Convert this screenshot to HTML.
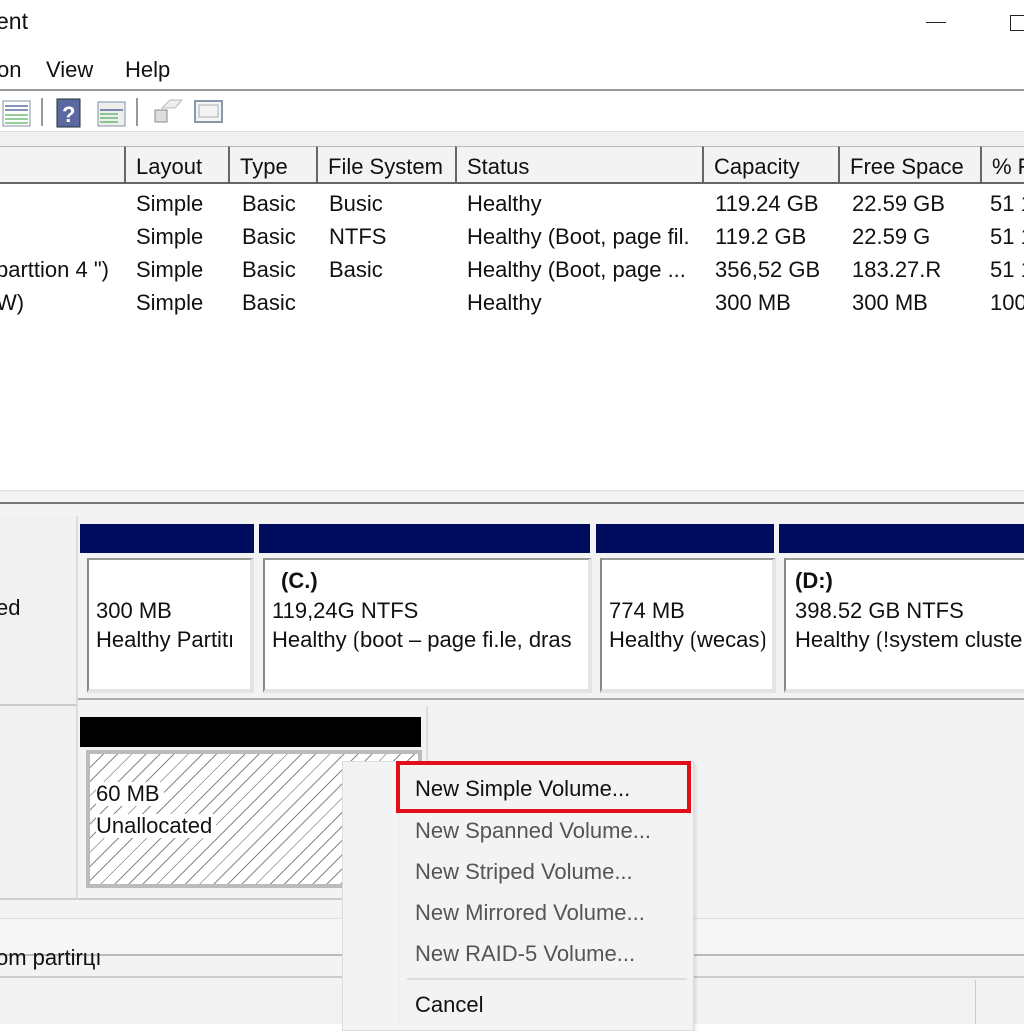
<!DOCTYPE html>
<html><head><meta charset="utf-8"><style>
*{margin:0;padding:0;box-sizing:border-box}
body{width:1024px;height:1024px;overflow:hidden;background:#fff;font-family:"Liberation Sans",sans-serif;color:#111;position:relative}
.a{position:absolute;white-space:nowrap}
.t{font-size:22px;line-height:24px}
.hd{position:absolute;top:146px;height:38px;background:#f3f3f3;border-left:2px solid #666;border-bottom:2px solid #666;border-top:1px solid #bbb;font-size:22px;line-height:40px;padding-left:10px;overflow:hidden}
.nv{position:absolute;top:524px;height:29px;background:#000c5e}
.bx{position:absolute;top:558px;height:135px;background:#fff;border-left:2px solid #888;border-top:2px solid #999;border-right:4px solid #e4e4e4;border-bottom:4px solid #e4e4e4;overflow:hidden}
.bx div{position:absolute;left:7px;font-size:22px;line-height:29px}
.mi{position:absolute;left:415px;font-size:22px;color:#555}
</style></head><body>
<div class="a" style="left:-4px;top:8px;font-size:23px">ent</div>
<div class="a" style="left:926px;top:22px;width:20px;height:1px;background:#222"></div>
<div class="a" style="left:1010px;top:15px;width:16px;height:16px;border:1px solid #222"></div>
<div class="a t" style="left:-3px;top:58px;font-size:22px">on</div>
<div class="a t" style="left:46px;top:58px;font-size:22px">View</div>
<div class="a t" style="left:125px;top:58px;font-size:22px">Help</div>
<div class="a" style="left:0;top:89px;width:1024px;height:2px;background:#999"></div>
<svg class="a" style="left:0;top:96px" width="240" height="36">
<rect x="3" y="5" width="27" height="25" fill="#fff" stroke="#8090a0"/>
<g stroke="#0a2a6a"><line x1="5" y1="10" x2="28" y2="10"/><line x1="5" y1="14" x2="28" y2="14"/></g>
<g stroke="#2a9a3a"><line x1="5" y1="19" x2="28" y2="19"/><line x1="5" y1="23" x2="28" y2="23"/><line x1="5" y1="27" x2="28" y2="27"/></g>
<line x1="42" y1="2" x2="42" y2="30" stroke="#333"/>
<rect x="57" y="3" width="23" height="28" fill="#5a6aa0" stroke="#233"/>
<text x="62" y="26" font-size="22" font-weight="bold" fill="#fff" font-family="Liberation Sans">?</text>
<rect x="98" y="6" width="27" height="24" fill="#eee" stroke="#8090a0"/>
<g stroke="#2a9a3a"><line x1="100" y1="18" x2="118" y2="18"/><line x1="100" y1="22" x2="118" y2="22"/><line x1="100" y1="26" x2="118" y2="26"/></g>
<line x1="100" y1="14" x2="123" y2="14" stroke="#0a2a6a"/>
<line x1="137" y1="2" x2="137" y2="30" stroke="#333"/>
<rect x="155" y="14" width="12" height="12" fill="#ddd" stroke="#889"/>
<path d="M162 12 L170 4 L182 4 L175 12 Z" fill="#eee" stroke="#bbb"/>
<rect x="195" y="5" width="27" height="21" fill="#f4f4f4" stroke="#8898a8" stroke-width="2"/>
<rect x="199" y="9" width="19" height="12" fill="none" stroke="#aab"/>
</svg>
<div class="a" style="left:0;top:131px;width:1024px;height:15px;background:#f0f0f0;border-top:1px solid #ddd"></div>
<div class="hd" style="left:0;width:124px;border-left:none"></div>
<div class="hd" style="left:124px;width:104px">Layout</div>
<div class="hd" style="left:228px;width:88px">Type</div>
<div class="hd" style="left:316px;width:139px">File System</div>
<div class="hd" style="left:455px;width:247px">Status</div>
<div class="hd" style="left:702px;width:136px">Capacity</div>
<div class="hd" style="left:838px;width:142px">Free Space</div>
<div class="hd" style="left:980px;width:60px">% F</div>
<div class="a t" style="left:136px;top:187px;line-height:33px">Simple<br>Simple<br>Simple<br>Simple</div>
<div class="a t" style="left:242px;top:187px;line-height:33px">Basic<br>Basic<br>Basic<br>Basic</div>
<div class="a t" style="left:329px;top:187px;line-height:33px">Busic<br>NTFS<br>Basic</div>
<div class="a t" style="left:467px;top:187px;line-height:33px">Healthy<br>Healthy (Boot, page fil.<br>Healthy (Boot, page ...<br>Healthy</div>
<div class="a t" style="left:715px;top:187px;line-height:33px">119.24 GB<br>119.2 GB<br>356,52 GB<br>300 MB</div>
<div class="a t" style="left:852px;top:187px;line-height:33px">22.59 GB<br>22.59 G<br>183.27.R<br>300 MB</div>
<div class="a t" style="left:990px;top:187px;line-height:33px">51 1<br>51 1<br>51 1<br>100</div>
<div class="a t" style="left:-4px;top:253px;line-height:33px">parttion 4 ")<br>W)</div>
<div class="a" style="left:0;top:490px;width:1024px;height:534px;background:#f3f3f3;border-top:1px solid #ddd"></div>
<div class="a" style="left:0;top:502px;width:1024px;height:2px;background:#777"></div>
<div class="a" style="left:0;top:516px;width:78px;height:190px;background:#f1f1f1;border-right:2px solid #ddd;border-bottom:2px solid #ccc"></div>
<div class="a t" style="left:-4px;top:596px">ed</div>
<div class="a" style="left:0;top:706px;width:78px;height:194px;background:#f1f1f1;border-right:2px solid #ddd;border-bottom:2px solid #ccc"></div>
<div class="a" style="left:78px;top:516px;width:946px;height:184px;border-bottom:2px solid #aaa"></div>
<div class="nv" style="left:80px;width:174px"></div>
<div class="nv" style="left:259px;width:331px"></div>
<div class="nv" style="left:596px;width:178px"></div>
<div class="nv" style="left:779px;width:250px"></div>
<div class="bx" style="left:87px;width:167px"><div style="top:36px">300 MB<br>Healthy Partitı</div></div>
<div class="bx" style="left:263px;width:329px"><div style="top:6px;font-weight:bold;left:16px">(C.)</div><div style="top:36px">119,24G NTFS<br>Healthy ⟮boot – page fi.le, dras</div></div>
<div class="bx" style="left:600px;width:176px"><div style="top:36px">774 MB<br>Healthy ⟮wecas⟯</div></div>
<div class="bx" style="left:784px;width:250px"><div style="top:6px;font-weight:bold;left:9px">(D:)</div><div style="top:36px;left:9px">398.52 GB NTFS<br>Healthy ⟮!system cluste</div></div>
<div class="a" style="left:78px;top:706px;width:350px;height:194px;border-right:2px solid #ddd;border-bottom:2px solid #ccc"></div>
<div class="a" style="left:80px;top:717px;width:341px;height:30px;background:#000"></div>
<div class="a" style="left:86px;top:750px;width:336px;height:138px;border:4px solid #bbb;background:repeating-linear-gradient(135deg,#fff 0 9px,#888 9px 10px)"></div>
<div class="a t" style="left:96px;top:782px;background:#fff;padding-right:4px">60 MB</div>
<div class="a t" style="left:96px;top:814px;background:#fff;padding-right:4px">Unallocated</div>
<div class="a" style="left:0;top:918px;width:1024px;height:38px;background:#f6f6f6;border-top:1px solid #ddd;border-bottom:2px solid #bbb"></div>
<div class="a t" style="left:-4px;top:946px">om partirцı</div>
<div class="a" style="left:0;top:976px;width:1024px;height:48px;background:#f2f2f2;border-top:2px solid #ccc"></div>
<div class="a" style="left:975px;top:980px;width:1px;height:44px;background:#ccc"></div>
<div class="a" style="left:342px;top:761px;width:352px;height:270px;background:#f3f3f3;border:1px solid #ddd;box-shadow:2px 2px 3px rgba(0,0,0,.1)"></div>
<div class="a" style="left:398px;top:761px;width:1px;height:263px;background:#eaeaea"></div>
<div class="a" style="left:396px;top:761px;width:295px;height:52px;border:4px solid #e0101a"></div>
<div class="mi" style="top:776px;color:#111">New Simple Volume...</div>
<div class="mi" style="top:818px">New Spanned Volume...</div>
<div class="mi" style="top:859px">New Striped Volume...</div>
<div class="mi" style="top:900px">New Mirrored Volume...</div>
<div class="mi" style="top:941px">New RAID-5 Volume...</div>
<div class="a" style="left:407px;top:978px;width:280px;height:2px;background:#ddd"></div>
<div class="mi" style="top:992px;color:#111">Cancel</div>
</body></html>
